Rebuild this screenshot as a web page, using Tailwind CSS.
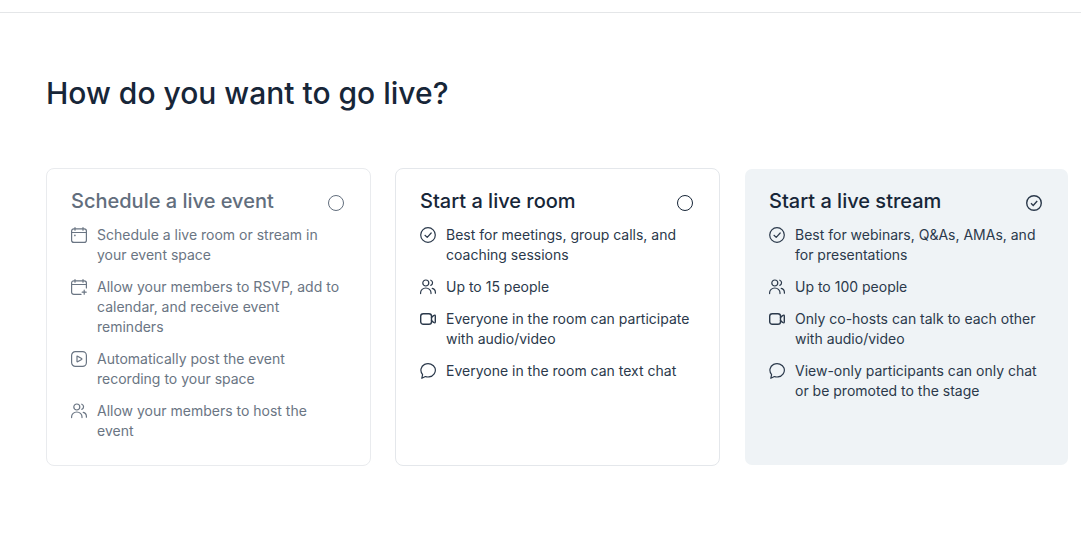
<!DOCTYPE html>
<html lang="en">
<head>
    <meta charset="UTF-8">
    <meta name="viewport" content="width=device-width, initial-scale=1.0">
    <title>Go live</title>
    <script src="https://cdn.jsdelivr.net/npm/@tailwindcss/browser@4"></script>
</head>
<body class="min-h-screen bg-white font-['Inter',sans-serif] text-[#2b394b]">
    <!-- Icon set -->
    <svg class="hidden" aria-hidden="true">
        <symbol id="calendar" viewBox="0 0 16 16">
            <rect x=".6" y="1.8" width="14.8" height="13.6" rx="2.2" />
            <path d="M.6 5.5h14.8M4 .6v2.600M12 .6v2.600" />
            <path d="M3.900 8.300v.3" stroke-width="1.600" />
        </symbol>
        <symbol id="calendar-add" viewBox="0 0 16 16">
            <path d="M10 15.4H2.8A2.2 2.2 0 0 1 .6 13.2V4A2.2 2.2 0 0 1 2.8 1.8h10.4A2.2 2.2 0 0 1 15.4 4v5M.6 5.500h14.800M4 .6v2.600M12 .6v2.600M13.200 11.200v4M11.200 13.200h4" />
        </symbol>
        <symbol id="play" viewBox="0 0 16 16">
            <rect x=".6" y=".6" width="14.8" height="14.8" rx="3.8" />
            <path d="M6 5.500q0-.6.6-.3l4 2.300q.6.500 0 .9l-4 2.300q-.6.300-.6-.3z" />
        </symbol>
        <symbol id="people" viewBox="0 0 16 16">
            <circle cx="5.8" cy="4" r="3" />
            <path d="M.6 14.6v-.8a5.2 4.8 0 0 1 10.4 0v.8M10.8 1.2a2.8 2.8 0 0 1 0 5.2M12.2 9.400a4.200 4.200 0 0 1 3.200 4.200v.6" />
        </symbol>
        <symbol id="check" viewBox="0 0 16 16">
            <circle cx="8" cy="8" r="7.3" />
            <path d="M5 8.3l2.2 2.1L11.2 6" />
        </symbol>
        <symbol id="video" viewBox="0 0 16 16">
            <rect x=".7" y="2.700" width="10.800" height="10.600" rx="2.600" />
            <path d="M11.500 6.400l2.200-1.900q1.600-.9 1.600.8v5.400q0 1.700-1.600.8l-2.200-1.900" />
        </symbol>
        <symbol id="chat" viewBox="0 0 16 16">
            <path d="M2.6 11.6C-.4 8 .8 3.200 4.600 1.400 8.600-.4 13.600 1.200 15 5c1.400 4.200-1.600 8.400-6 8.900-1.300.2-2.500 0-3.600-.4L1.800 15.300z" />
        </symbol>
    </svg>

    <header class="h-[13px] border-b border-[#e4e6e8]"></header>

    <main class="pt-[60px] pr-3 pb-16 pl-[46px]">
        <h1 class="text-3xl leading-10 font-medium text-[#172638]">How do you want to go live?</h1>

        <form class="mt-[55px] grid grid-cols-3 gap-6">
            <label class="block rounded-lg border border-[#e9ebee] px-6 pt-4 pb-6 text-[#6a7583]">
                <span class="flex items-start justify-between">
                    <span class="text-xl leading-8 font-medium text-[#626e7d]">Schedule a live event</span>
                    <span class="mt-2 grid size-5 place-items-center">
                        <input type="radio" name="live" value="event" class="peer col-start-1 row-start-1 size-4 appearance-none rounded-full border border-[#626e7d] checked:border-transparent">
                        <svg class="invisible col-start-1 row-start-1 size-4 fill-none stroke-current stroke-[1.2] peer-checked:visible"><use href="#check" /></svg>
                    </span>
                </span>
                <span class="mt-2 flex flex-col gap-3 text-sm leading-5">
                    <span class="flex gap-2.5">
                        <svg class="mt-0.5 size-4 shrink-0 fill-none stroke-current stroke-[1.2]" stroke-linecap="round" stroke-linejoin="round"><use href="#calendar" /></svg>
                        <span>Schedule a live room or stream in your event space</span>
                    </span>
                    <span class="flex gap-2.5">
                        <svg class="mt-0.5 size-4 shrink-0 fill-none stroke-current stroke-[1.2]" stroke-linecap="round" stroke-linejoin="round"><use href="#calendar-add" /></svg>
                        <span>Allow your members to RSVP, add to calendar, and receive event reminders</span>
                    </span>
                    <span class="flex gap-2.5">
                        <svg class="mt-0.5 size-4 shrink-0 fill-none stroke-current stroke-[1.2]" stroke-linecap="round" stroke-linejoin="round"><use href="#play" /></svg>
                        <span>Automatically post the event recording to your space</span>
                    </span>
                    <span class="flex gap-2.5">
                        <svg class="mt-0.5 size-4 shrink-0 fill-none stroke-current stroke-[1.2]" stroke-linecap="round" stroke-linejoin="round"><use href="#people" /></svg>
                        <span>Allow your members to host the event</span>
                    </span>
                </span>
            </label>

            <label class="block rounded-lg border border-[#e4e7eb] px-6 pt-4 pb-6">
                <span class="flex items-start justify-between">
                    <span class="text-xl leading-8 font-medium text-[#172638]">Start a live room</span>
                    <span class="mt-2 grid size-5 place-items-center">
                        <input type="radio" name="live" value="room" class="peer col-start-1 row-start-1 size-4 appearance-none rounded-full border border-[#172638] checked:border-transparent">
                        <svg class="invisible col-start-1 row-start-1 size-4 fill-none stroke-current stroke-[1.2] peer-checked:visible"><use href="#check" /></svg>
                    </span>
                </span>
                <span class="mt-2 flex flex-col gap-3 text-sm leading-5">
                    <span class="flex gap-2.5">
                        <svg class="mt-0.5 size-4 shrink-0 fill-none stroke-current stroke-[1.2]" stroke-linecap="round" stroke-linejoin="round"><use href="#check" /></svg>
                        <span>Best for meetings, group calls, and coaching sessions</span>
                    </span>
                    <span class="flex gap-2.5">
                        <svg class="mt-0.5 size-4 shrink-0 fill-none stroke-current stroke-[1.2]" stroke-linecap="round" stroke-linejoin="round"><use href="#people" /></svg>
                        <span>Up to 15 people</span>
                    </span>
                    <span class="flex gap-2.5">
                        <svg class="mt-0.5 size-4 shrink-0 fill-none stroke-current stroke-[1.4]" stroke-linecap="round" stroke-linejoin="round"><use href="#video" /></svg>
                        <span>Everyone in the room can participate with audio/video</span>
                    </span>
                    <span class="flex gap-2.5">
                        <svg class="mt-0.5 size-4 shrink-0 fill-none stroke-current stroke-[1.2]" stroke-linecap="round" stroke-linejoin="round"><use href="#chat" /></svg>
                        <span>Everyone in the room can text chat</span>
                    </span>
                </span>
            </label>

            <label class="block rounded-lg border border-transparent bg-[#eff3f6] bg-clip-padding px-6 pt-4 pb-6">
                <span class="flex items-start justify-between">
                    <span class="text-xl leading-8 font-medium text-[#172638]">Start a live stream</span>
                    <span class="mt-2 grid size-5 place-items-center">
                        <input type="radio" name="live" value="stream" checked class="peer col-start-1 row-start-1 size-4 appearance-none rounded-full border border-[#172638] checked:border-transparent">
                        <svg class="invisible col-start-1 row-start-1 size-4 fill-none stroke-current stroke-[1.4] peer-checked:visible"><use href="#check" /></svg>
                    </span>
                </span>
                <span class="mt-2 flex flex-col gap-3 text-sm leading-5">
                    <span class="flex gap-2.5">
                        <svg class="mt-0.5 size-4 shrink-0 fill-none stroke-current stroke-[1.2]" stroke-linecap="round" stroke-linejoin="round"><use href="#check" /></svg>
                        <span>Best for webinars, Q&amp;As, AMAs, and for presentations</span>
                    </span>
                    <span class="flex gap-2.5">
                        <svg class="mt-0.5 size-4 shrink-0 fill-none stroke-current stroke-[1.2]" stroke-linecap="round" stroke-linejoin="round"><use href="#people" /></svg>
                        <span>Up to 100 people</span>
                    </span>
                    <span class="flex gap-2.5">
                        <svg class="mt-0.5 size-4 shrink-0 fill-none stroke-current stroke-[1.4]" stroke-linecap="round" stroke-linejoin="round"><use href="#video" /></svg>
                        <span>Only co-hosts can talk to each other with audio/video</span>
                    </span>
                    <span class="flex gap-2.5">
                        <svg class="mt-0.5 size-4 shrink-0 fill-none stroke-current stroke-[1.2]" stroke-linecap="round" stroke-linejoin="round"><use href="#chat" /></svg>
                        <span>View-only participants can only chat or be promoted to the stage</span>
                    </span>
                </span>
            </label>
        </form>
    </main>
</body>
</html>
